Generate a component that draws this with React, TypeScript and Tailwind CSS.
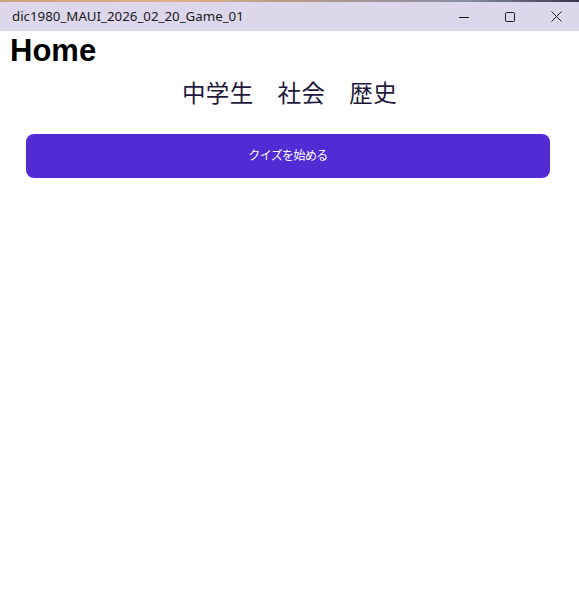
import React from 'react';

export default function App() {
  return (
    <div className="w-[579px] h-[591px] bg-white flex flex-col overflow-hidden" style={{ fontFamily: '"Noto Sans", "Noto Sans CJK JP", sans-serif' }}>
      {/* top strip (desktop behind) */}
      <div className="h-[2px] bg-[linear-gradient(90deg,#c9a27a,#e2b08a_30%,#b89a86_50%,#8a8fa8_80%,#3a3550)]" />
      {/* title bar */}
      <div className="h-[29px] bg-[#dcd7ea] flex items-center">
        <span className="pl-[12px] text-[13.3px] text-[#1a1a1a] flex-1">dic1980_MAUI_2026_02_20_Game_01</span>
        <div className="flex h-full">
          <div className="w-[46px] flex items-center justify-center">
            <svg width="10" height="10" viewBox="0 0 10 10"><path d="M0 5.5h10" stroke="#1a1a1a" strokeWidth="1" /></svg>
          </div>
          <div className="w-[46px] flex items-center justify-center">
            <svg width="10" height="10" viewBox="0 0 10 10"><rect x="0.5" y="0.5" width="9" height="9" rx="1" fill="none" stroke="#1a1a1a" strokeWidth="1" /></svg>
          </div>
          <div className="w-[46px] flex items-center justify-center">
            <svg width="11" height="11" viewBox="0 0 11 11"><path d="M0.5 0.5l10 10M10.5 0.5l-10 10" stroke="#1a1a1a" strokeWidth="1" /></svg>
          </div>
        </div>
      </div>
      {/* page */}
      <div className="flex flex-col">
        <h1 className="pl-[10px] pt-[2px] text-[31px] leading-[36px] font-bold text-black" style={{ fontFamily: '"Liberation Sans", Arial, sans-serif' }}>Home</h1>
        <p className="pt-[4px] text-center text-[23.5px] leading-[40px] text-[#1f1a3d] tracking-[0.4px]">中学生　社会　歴史</p>
        <div className="pl-[26px] pr-[29px] pt-[21px]">
          <button className="w-full h-[44px] rounded-[8px] bg-[#512bd4] text-white text-[12px] tracking-[-0.6px]">クイズを始める</button>
        </div>
      </div>
    </div>
  );
}
